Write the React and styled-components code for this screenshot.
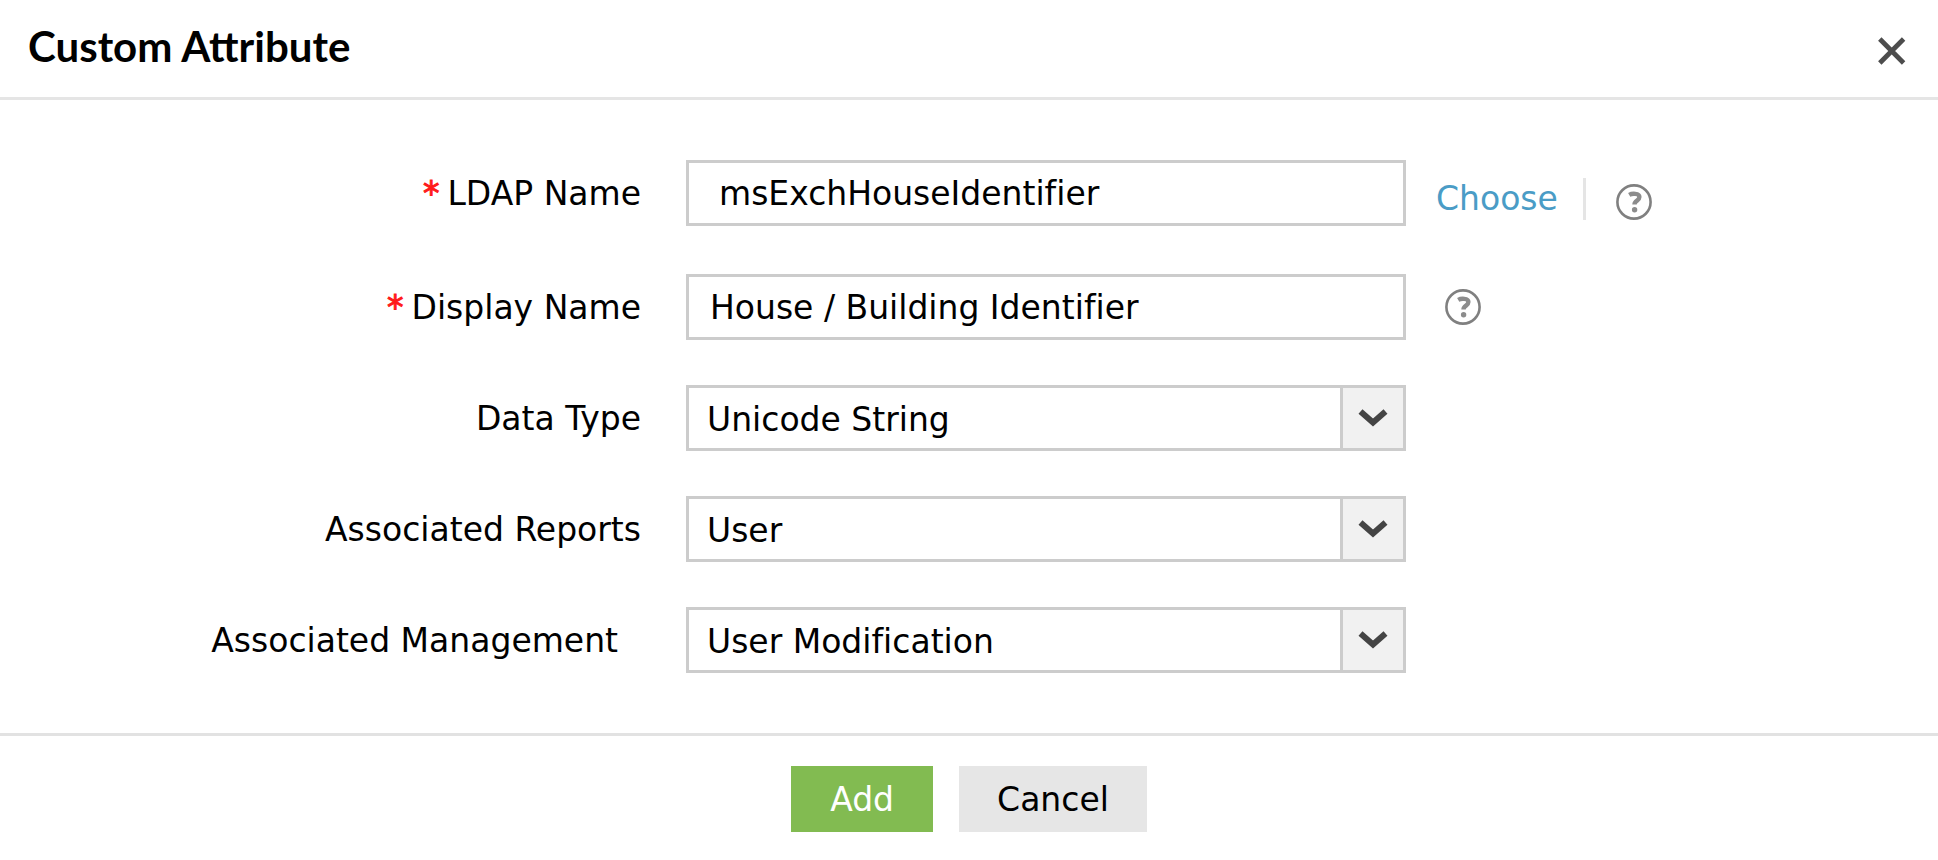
import styled, { createGlobalStyle } from "styled-components";

const GlobalStyle = createGlobalStyle`
  * {
    box-sizing: border-box;
  }

  body {
    margin: 0;
    background: #fff;
    color: #000;
    font-family: Verdana, "DejaVu Sans", sans-serif;
    font-size: 33px;
  }

  button,
  input,
  select {
    color: inherit;
    font: inherit;
    font-variant-ligatures: none;
  }
`;

const Header = styled.header`
  display: flex;
  align-items: center;
  justify-content: space-between;
  padding: 18px 28px 22px;
  border-bottom: 3px solid #e5e5e5;
`;

const Title = styled.h1`
  margin: 0;
  font-family: Lato, sans-serif;
  font-size: 42px;
  font-weight: 700;
  line-height: 57px;
`;

const CloseButton = styled.button`
  display: flex;
  padding: 8px 4px 0;
  border: 0;
  background: none;
  cursor: pointer;
`;

const Fields = styled.div`
  display: flex;
  flex-direction: column;
  gap: 45px;
  padding: 60px 0;
`;

const RequiredFields = styled.div`
  display: flex;
  flex-direction: column;
  gap: 48px;
`;

const Row = styled.div`
  display: grid;
  grid-template-columns: 686fr 720fr 532fr;
  align-items: start;
`;

const Label = styled.label`
  height: 66px;
  padding-right: ${(props) => (props.$inset ? 68 : 45)}px;
  line-height: 68px;
  text-align: right;
  white-space: nowrap;
`;

const Star = styled.span`
  margin-right: 8px;
  color: #ff1a1a;
  -webkit-text-stroke: 1px #ff1a1a;
`;

const TextInput = styled.input`
  width: 100%;
  height: 66px;
  padding: 0 ${(props) => (props.$indent ? 30 : 21)}px;
  border: 3px solid #ccc;
  border-radius: 0;
  background: #fff;
  outline: none;
`;

const SelectBox = styled.div`
  position: relative;
`;

const Select = styled.select`
  display: block;
  width: 100%;
  height: 66px;
  padding: 2px 80px 0 18px;
  border: 3px solid #ccc;
  border-radius: 0;
  background: #fff;
  appearance: none;
  outline: none;
`;

const Arrow = styled.span`
  position: absolute;
  top: 0;
  right: 0;
  display: flex;
  align-items: center;
  justify-content: center;
  width: 66px;
  height: 66px;
  border: 3px solid #ccc;
  background: #f1f1f1;
  pointer-events: none;
`;

const Aside = styled.div`
  display: flex;
  align-items: flex-end;
  padding: ${(props) => (props.$wide ? "18px 0 0 30px" : "15px 0 0 39px")};
`;

const ChooseLink = styled.a`
  padding-right: 25px;
  border-right: 3px solid #e5e5e5;
  margin-right: 30px;
  color: #4a9cc6;
  line-height: 42px;
  text-decoration: none;
`;

const HelpButton = styled.button`
  display: flex;
  padding: 0;
  border: 0;
  background: none;
  cursor: pointer;
`;

const Footer = styled.footer`
  display: flex;
  justify-content: center;
  gap: 26px;
  padding: 30px 0 28px;
  border-top: 3px solid #e2e2e2;
`;

const Button = styled.button`
  min-width: 142px;
  height: 66px;
  padding: 0 38px;
  border: 0;
  background: ${(props) => (props.$primary ? "#82bb51" : "#e6e6e6")};
  color: ${(props) => (props.$primary ? "#fff" : "#000")};
  cursor: pointer;
`;

const selects = [
  { id: "dataType", label: "Data Type", value: "Unicode String" },
  { id: "reports", label: "Associated Reports", value: "User" },
  {
    id: "management",
    label: "Associated Management",
    value: "User Modification",
    inset: true,
  },
];

function Help({ label }) {
  return (
    <HelpButton type="button" aria-label={label}>
      <svg width="36" height="36" viewBox="0 0 36 36" fill="none">
        <circle cx="18" cy="18" r="16.6" stroke="#808080" strokeWidth="2.6" />
        <path
          d="M13.2 10.9c2.6-1.5 10.2-2 10.2 2.2 0 3.8-4.9 3.2-4.9 7.4"
          stroke="#8c8c8c"
          strokeWidth="4.4"
        />
        <circle cx="18.6" cy="25.8" r="2.7" fill="#8c8c8c" />
      </svg>
    </HelpButton>
  );
}

export default function App() {
  return (
    <>
      <GlobalStyle />
      <Header>
        <Title>Custom Attribute</Title>
        <CloseButton type="button" aria-label="Close">
          <svg width="28" height="28" viewBox="0 0 28 28">
            <path
              d="M1.8 2 25.6 26M25.6 2 1.8 26"
              stroke="#4d4d4d"
              strokeWidth="4.8"
            />
          </svg>
        </CloseButton>
      </Header>
      <form onSubmit={(e) => e.preventDefault()}>
        <Fields>
          <RequiredFields>
            <Row>
              <Label htmlFor="ldapName">
                <Star>*</Star>LDAP Name
              </Label>
              <TextInput
                id="ldapName"
                defaultValue="msExchHouseIdentifier"
                $indent
              />
              <Aside $wide>
                <ChooseLink href="#choose">Choose</ChooseLink>
                <Help label="LDAP name help" />
              </Aside>
            </Row>
            <Row>
              <Label htmlFor="displayName">
                <Star>*</Star>Display Name
              </Label>
              <TextInput
                id="displayName"
                defaultValue="House / Building Identifier"
              />
              <Aside>
                <Help label="Display name help" />
              </Aside>
            </Row>
          </RequiredFields>
          {selects.map((field) => (
            <Row key={field.id}>
              <Label htmlFor={field.id} $inset={field.inset}>
                {field.label}
              </Label>
              <SelectBox>
                <Select id={field.id} defaultValue={field.value}>
                  <option>{field.value}</option>
                </Select>
                <Arrow>
                  <svg width="30" height="20" viewBox="0 0 30 20" fill="none">
                    <path
                      d="M2.5 3.5 15 14.5 27.5 3.5"
                      stroke="#444"
                      strokeWidth="6"
                    />
                  </svg>
                </Arrow>
              </SelectBox>
            </Row>
          ))}
        </Fields>
        <Footer>
          <Button type="submit" $primary>
            Add
          </Button>
          <Button type="button">Cancel</Button>
        </Footer>
      </form>
    </>
  );
}
